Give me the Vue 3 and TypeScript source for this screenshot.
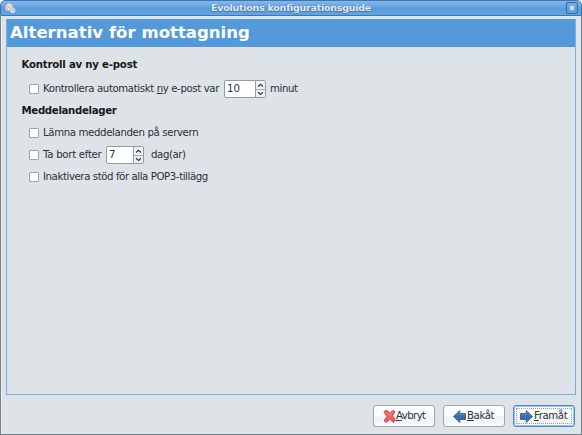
<script setup lang="ts">
import { ref } from 'vue'

interface WizardButton {
  icon: 'cancel' | 'back' | 'forward'
  key: string
  rest: string
  focused?: boolean
}

const title = 'Evolutions konfigurationsguide'
const minutes = ref(10)
const days = ref(7)
const buttons: WizardButton[] = [
  { icon: 'cancel', key: 'A', rest: 'vbryt' },
  { icon: 'back', key: 'B', rest: 'akåt' },
  { icon: 'forward', key: 'F', rest: 'ramåt', focused: true },
]
</script>

<template>
  <div class="window">
    <header class="titlebar">
      <svg class="app-icon" viewBox="0 0 12 12">
        <path d="M1 4.2 4.2 1l4.3 1 .8 4-3.2 3.2-4.7-.8z" fill="#e6e5de" stroke="#a5a59e" stroke-width=".8" />
        <path d="M1.4 4.4 5 5.2l3.2-3M5 5.2 2 8" fill="none" stroke="#aaa9a2" stroke-width=".7" />
        <circle cx="8.6" cy="8.4" r="2.7" fill="#edf1f7" stroke="#a3b2c7" />
        <path d="M8.6 6.9v1.6h1.2" fill="none" stroke="#6684ad" stroke-width=".8" />
      </svg>
      <span class="caption">{{ title }}</span>
      <span class="close">
        <svg viewBox="0 0 6 6"><path d="M1 1l4 4M5 1 1 5" stroke="#e4edf7" stroke-width="1.7" /></svg>
      </span>
    </header>
    <div class="body">
      <main class="page">
        <h1><span>Alternativ för mottagning</span></h1>
        <section class="options">
          <h2 class="first">Kontroll av ny e-post</h2>
          <div class="row every">
            <i class="check" />
            <span class="label auto">Kontrollera automatiskt <u>n</u>y e-post var</span>
            <span class="spin wide">
              <span class="value">{{ minutes }}</span>
              <svg class="steps" viewBox="0 0 9 16"><path d="M0 8.5h9" stroke="#9caab9" /><path d="M2 5.5l2.5-2.3L7 5.5M2 11.2l2.5 2.3L7 11.2" fill="none" stroke="#333b43" stroke-width="1.2" /></svg>
            </span>
            <span class="label">minut</span>
          </div>
          <h2 class="second">Meddelandelager</h2>
          <div class="row keep"><i class="check" /><span class="label server">Lämna meddelanden på servern</span></div>
          <div class="row">
            <i class="check" />
            <span class="label until">Ta bort efter</span>
            <span class="spin">
              <span class="value">{{ days }}</span>
              <svg class="steps" viewBox="0 0 9 16"><path d="M0 8.5h9" stroke="#9caab9" /><path d="M2 5.5l2.5-2.3L7 5.5M2 11.2l2.5 2.3L7 11.2" fill="none" stroke="#333b43" stroke-width="1.2" /></svg>
            </span>
            <span class="label">dag(ar)</span>
          </div>
          <div class="row"><i class="check" /><span class="label pop">Inaktivera stöd för alla POP3-tillägg</span></div>
        </section>
      </main>
      <footer class="actions">
        <button v-for="b in buttons" :key="b.icon" type="button" class="btn" :class="[b.icon, { focused: b.focused }]">
          <svg v-if="b.icon === 'cancel'" viewBox="0 0 13 13">
            <path d="M2.2.6 4.7.8 6.7 3.4 9.6.5l2.4 1.1-2.4 4.3 3 4.5-2.4 2.1-3.4-3.4-3.4 3.4L1 10.7l3-4.4L1 2.3z" fill="#ee5f63" stroke="#d04149" stroke-width=".9" stroke-linejoin="round" />
            <path d="M3 2.1l3.3 4M9.6 2.4 6.8 5.7" stroke="#f79a9b" stroke-width=".8" />
          </svg>
          <svg v-else viewBox="0 0 13 13">
            <g :transform="b.icon === 'forward' ? 'translate(13 0) scale(-1 1)' : undefined">
              <path d="M.5 6.5 6.8.5v3h5.7v6H6.8v3z" fill="#3b6cae" stroke="#2b5792" stroke-width=".8" stroke-linejoin="round" />
              <path d="M2 6.3 6.1 2.5v2.1h5.4" fill="none" stroke="#6590c8" stroke-width=".7" />
            </g>
          </svg>
          <span class="btn-text"><u>{{ b.key }}</u>{{ b.rest }}</span>
        </button>
      </footer>
    </div>
  </div>
</template>

<style>
body {
  margin: 0;
  background: #fff;
}
</style>

<style scoped>
* {
  box-sizing: border-box;
}
.window {
  width: 582px;
  height: 435px;
  display: flex;
  flex-direction: column;
  overflow: hidden;
  background: #dee3e7;
  border-radius: 5px 5px 0 0;
  font: 10.2px/14px 'DejaVu Sans', sans-serif;
  color: #2b3137;
}
.titlebar {
  height: 16px;
  flex: none;
  display: flex;
  align-items: center;
  padding: 0 3px;
  border: 1px solid #3f75af;
  border-radius: 5px 5px 0 0;
  background: linear-gradient(#83b7ee 0, #73abe7 25%, #599cdc 55%, #64a5e3 100%);
}
.app-icon {
  width: 12px;
  height: 12px;
}
.caption {
  flex: 1;
  text-align: center;
  font-size: 9.5px;
  letter-spacing: -0.25px;
  font-weight: bold;
  color: #e3ebf3;
  text-shadow: 0 0 1px #3d658d, 0 1px 1px #47729f;
}
.close {
  width: 12px;
  height: 12px;
  display: flex;
  align-items: center;
  justify-content: center;
  border: 1px solid #38699d;
  border-radius: 2px;
}
.close svg {
  width: 6px;
  height: 6px;
}
.body {
  flex: 1;
  display: flex;
  flex-direction: column;
  padding: 3px 5px 6px;
  border: solid #777f88;
  border-width: 0 1px 1px;
  box-shadow: inset 1px 0 #eef1f4;
}
.page {
  height: 376px;
  flex: none;
  border: 1px solid #7cafe8;
}
h1 {
  margin: -1px 0 0;
  height: 28px;
  padding-left: 3px;
  background: #5499d9;
  color: #fff;
  font-size: 16.5px;
  letter-spacing: 0.03px;
  line-height: 28px;
  white-space: nowrap;
}
.options {
  display: flex;
  flex-direction: column;
  padding: 11px 0 0 14.5px;
}
h2 {
  margin: 0;
  font-size: 10.2px;
  letter-spacing: -0.22px;
  line-height: 14px;
  color: #15191c;
}
.second {
  margin-top: 4px;
  letter-spacing: -0.33px;
  line-height: 13px;
}
.row {
  height: 22px;
  display: flex;
  align-items: center;
  padding-left: 7.5px;
  white-space: nowrap;
}
.every {
  margin-top: 6px;
}
.keep {
  margin-top: 5px;
}
.label {
  letter-spacing: -0.41px;
}
.label.auto {
  width: 177px;
  letter-spacing: -0.39px;
}
.label.server {
  letter-spacing: -0.37px;
}
.label.pop {
  letter-spacing: -0.42px;
}
.label.until {
  width: 59px;
  letter-spacing: -0.29px;
}
.check {
  width: 10px;
  height: 10px;
  margin-right: 4px;
  border: 1px solid #9aa4ae;
  border-radius: 1px;
  background: #fff;
}
.spin {
  width: 38px;
  height: 18px;
  margin: 0 7px 0 4px;
  display: flex;
  border: 1px solid #8f9ca9;
  border-radius: 2px;
  background: #fff;
}
.spin.wide {
  width: 42px;
  margin: 0 4px 0 4px;
}
.value {
  flex: 1;
  padding: 1px 0 0 2px;
}
.steps {
  width: 10px;
  height: 16px;
  border-left: 1px solid #8f9ca9;
  background: #eef1f4;
}
.actions {
  display: flex;
  justify-content: flex-end;
  gap: 8px;
  padding: 10px 1px 0 0;
}
.btn {
  width: 62px;
  height: 22px;
  display: flex;
  align-items: center;
  padding: 0 0 0 9px;
  gap: 1px;
  border: 1px solid #9da8b3;
  border-radius: 3px;
  background: linear-gradient(#fff, #fcfdfd 50%, #eff1f3 54%, #f8f9fa);
  color: #2b3137;
  font: 10.2px/14px 'DejaVu Sans', sans-serif;
  letter-spacing: -0.4px;
}
.btn svg {
  width: 13px;
  height: 13px;
  flex: none;
}
.btn.cancel {
  gap: 0;
  letter-spacing: -0.6px;
}
.btn.focused {
  padding-left: 6px;
  border-color: #4f8bc8;
  box-shadow: inset 0 0 0 1px #9ac3ed;
  outline: 1px dotted #98a1aa;
  outline-offset: -4px;
}
u {
  text-decoration-thickness: 1px;
  text-underline-offset: 1px;
}
</style>
